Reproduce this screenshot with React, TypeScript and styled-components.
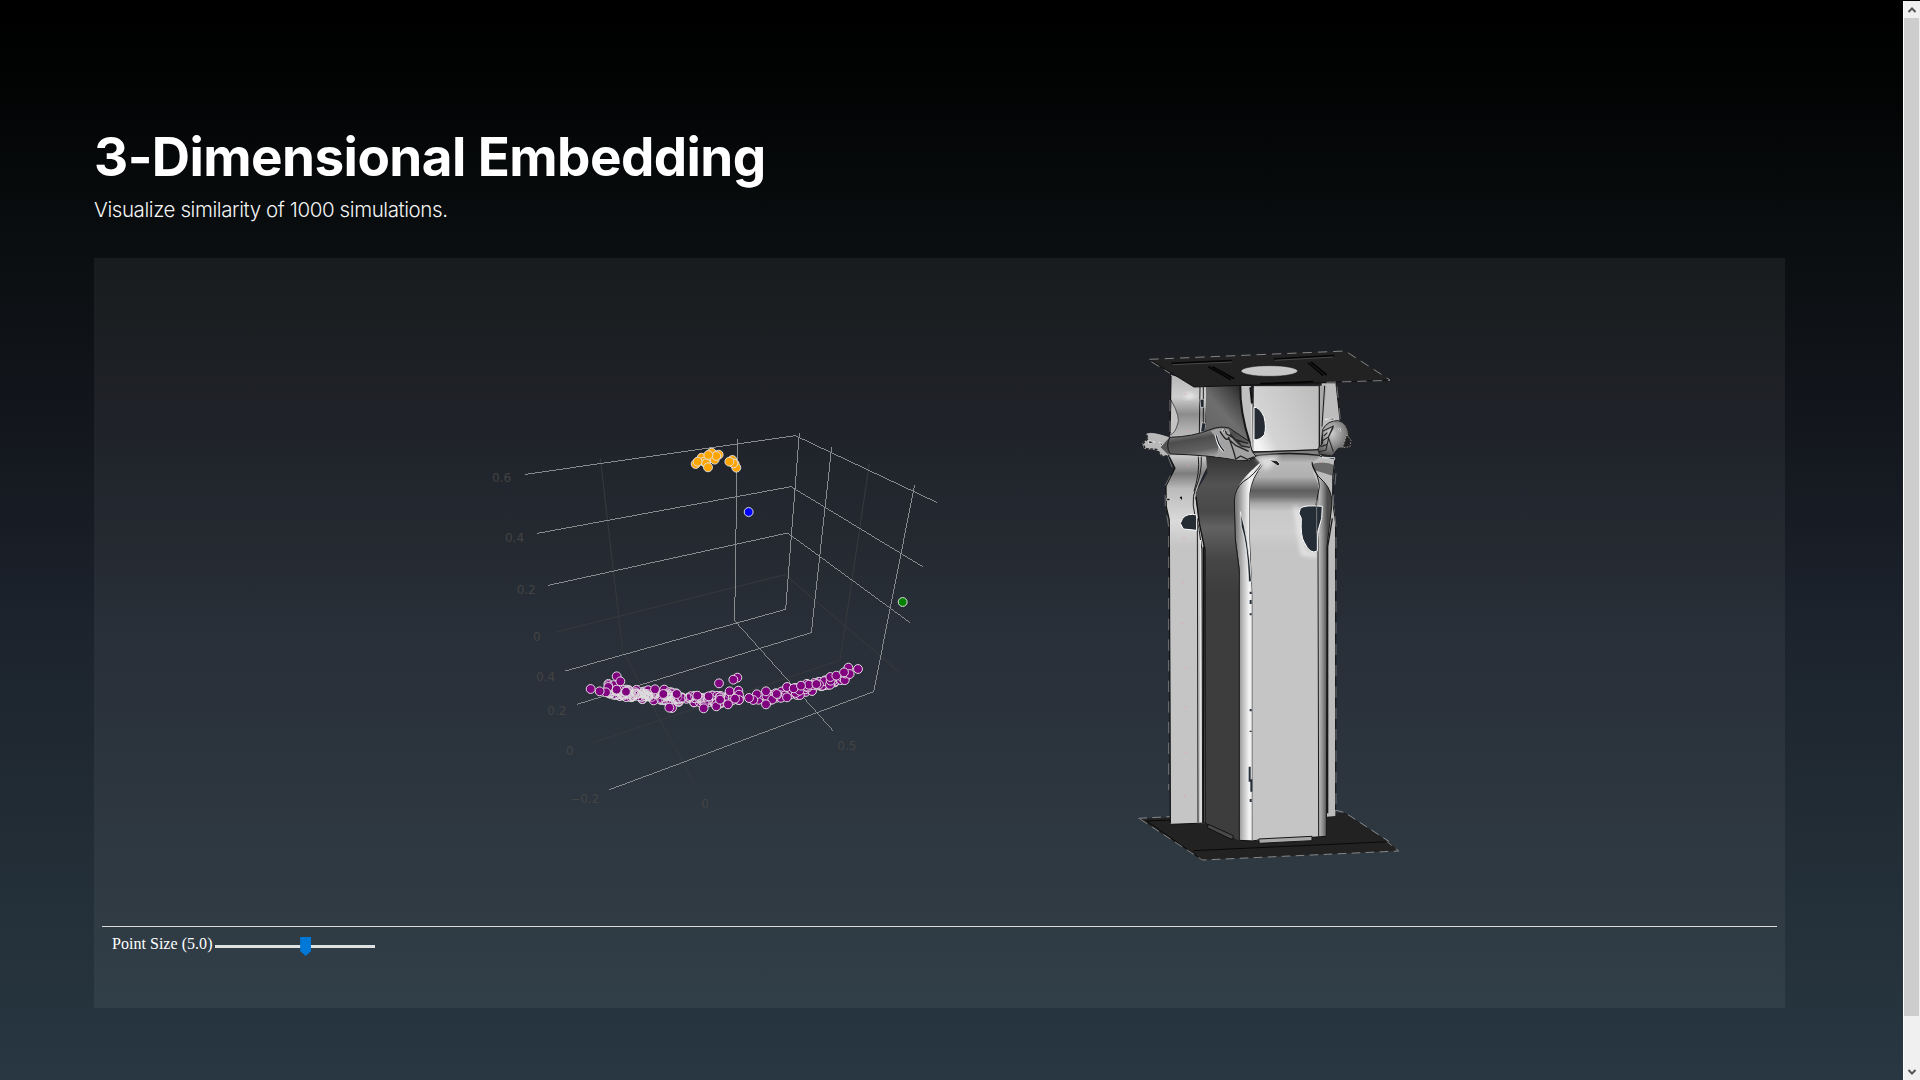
import React, { useState } from 'react';
import styled, { createGlobalStyle } from 'styled-components';

const GlobalStyle = createGlobalStyle`
  html, body { margin: 0; padding: 0; background: #000; }
  body { overflow: hidden; }
`;

const Page = styled.div`
  display: grid;
  grid-template-columns: 1fr 17px;
  height: 1080px;
  background: linear-gradient(180deg, #000 0%, #010202 6%, #0b0f11 24%, #14171e 41%, #1c232d 58%, #222d36 78%, #283742 100%);
`;

const Content = styled.main`
  display: flex;
  flex-direction: column;
  padding: 125px 118px 72px 94px;
`;

const Title = styled.h1`
  margin: 0;
  height: 64px;
  font: 700 53px/64px Inter, sans-serif;
  letter-spacing: -0.58px;
  color: #fff;
  white-space: nowrap;
`;

const Subtitle = styled.p`
  margin: 8px 0 0;
  height: 26px;
  font: 300 20.5px/26px Inter, sans-serif;
  letter-spacing: -0.41px;
  color: #f4f4f4;
  white-space: nowrap;
`;

const Panel = styled.section`
  display: flex;
  flex-direction: column;
  height: 750px;
  margin-top: 35px;
  padding: 0 8px;
  box-sizing: border-box;
  background: rgba(255, 255, 255, 0.055);
`;

const Views = styled.div`
  display: grid;
  grid-template-columns: 838px 837px;
  height: 668px;
  border-bottom: 1px solid #dcdcd8;
`;

const View = styled.svg`
  display: block;
  width: 100%;
  height: 668px;
`;

const Controls = styled.label`
  display: flex;
  align-items: center;
  height: 36px;
  padding: 0 9px 0 10px;
  font: 16px/36px 'Liberation Serif', serif;
  color: #fff;
`;

const LabelText = styled.span`
  width: 103px;
  height: 38px;
  letter-spacing: 0.03px;
  white-space: nowrap;
`;

const Slider = styled.input`
  appearance: none;
  width: 160px;
  height: 19px;
  margin: 3px 0 0;
  background: transparent;
  &::-webkit-slider-runnable-track {
    height: 3px;
    background: #dde1e1;
  }
  &::-webkit-slider-thumb {
    appearance: none;
    width: 11px;
    height: 19px;
    margin-top: -8px;
    background: #0078d7;
    clip-path: polygon(0 0, 100% 0, 100% 74%, 50% 100%, 0 74%);
  }
`;

const Scrollbar = styled.aside`
  display: flex;
  flex-direction: column;
  margin-top: 1px;
  border-left: 1px solid #fff;
  background: #f0f0f0;
`;

const ScrollArrow = styled.svg`
  display: block;
  width: 16px;
  height: 17px;
`;

const ScrollThumb = styled.div`
  height: 998px;
  margin-right: 1px;
  background: #cdcdcd;
`;

const ScrollRest = styled.div`
  flex: 1;
`;

const TickLabel = styled.text`
  font: 36px 'DejaVu Sans', Verdana, sans-serif;
  fill: #444;
`;

type Pt = [number, number];

const bright = [
  '136,163 946,47 1372,248',
  '172,340 933,200 1328,440',
  '205,496 923,339 1290,608',
  '256,753 917,568 958,38',
  '291,853 994,638 1055,82',
  '388,1109 1181,815 1304,194',
  '1060,933 764,602 772,56',
];
const faint = [
  '230,636 915,464 1257,756',
  '334,970 1080,721 1168,132',
  '645,1094 428,692 361,115',
];
const ticks: [number, number, string][] = [
  [36, 187, '0.6'], [75, 365, '0.4'], [110, 523, '0.2'], [159, 664, '0'],
  [168, 782, '0.4'], [202, 884, '0.2'], [258, 1005, '0'], [271, 1149, '−0.2'],
  [664, 1163, '0'], [1072, 991, '0.5'],
];

let seed = 11;
const rnd = () => {
  seed = (seed * 16807) % 2147483647;
  return seed / 2147483647;
};

const spine: Pt[] = [
  [375, 808], [410, 814], [450, 819], [500, 824], [560, 828], [610, 832], [660, 837],
  [720, 838], [780, 832], [805, 835], [850, 834], [890, 826], [930, 815], [970, 806],
  [1010, 799], [1050, 786], [1080, 776], [1110, 758],
];
const spineY = (x: number) => {
  let i = 0;
  while (i < spine.length - 2 && spine[i + 1][0] < x) i++;
  const [a, b] = [spine[i], spine[i + 1]];
  return a[1] + ((x - a[0]) / (b[0] - a[0])) * (b[1] - a[1]);
};
const band = (n: number, x0: number, x1: number, spread: number): Pt[] =>
  Array.from({ length: n }, () => {
    const x = x0 + rnd() * (x1 - x0);
    return [x, spineY(x) + (rnd() + rnd() - 1) * spread] as Pt;
  });

const dense = band(150, 385, 600, 19);
const middle = band(55, 590, 780, 17);
const right = band(85, 815, 1108, 17);

const highlights: Pt[] = [
  [410, 769], [421, 784], [525, 808], [385, 801], [576, 864], [568, 863], [671, 865], [709, 859], [744, 853],
  [749, 814], [775, 812], [777, 824], [777, 840], [652, 827], [686, 829], [720, 839], [765, 836],
  [378, 817], [359, 814], [332, 807], [410, 809], [438, 815], [590, 822], [550, 822],
  [772, 773], [760, 779], [717, 790],
  [820, 840], [858, 814], [858, 853], [807, 834], [921, 832], [890, 822], [921, 801], [941, 805],
  [963, 797], [1051, 771], [1069, 767], [1105, 743], [1109, 762], [1092, 757], [1134, 747],
];
const orange: Pt[] = [
  [647, 132], [665, 113], [672, 125], [690, 113], [678, 130], [684, 142], [716, 104], [695, 98],
  [704, 119], [709, 108], [685, 105], [653, 125], [757, 120], [764, 132], [769, 143], [760, 130], [748, 125],
];

const Dots = ({ pts, color }: { pts: Pt[]; color: string }) => (
  <g fill={color} stroke="#dedede" strokeWidth="3">
    {pts.map(([x, y], i) => <circle key={i} cx={x} cy={y} r="13.3" />)}
  </g>
);

const Embedding = () => (
  <View viewBox="102 258 838 668">
    <g transform="translate(480 420) scale(.333333)">
      <g fill="none" stroke="#373a3d" strokeWidth="3">
        {faint.map((p) => <polyline key={p} points={p} />)}
      </g>
      <g fill="none" stroke="#888b8e" strokeWidth="3" shapeRendering="crispEdges">
        {bright.map((p) => <polyline key={p} points={p} />)}
      </g>
      {ticks.map(([x, y, t]) => <TickLabel key={`${x}-${y}`} x={x} y={y}>{t}</TickLabel>)}
      <Dots pts={dense} color="#800080" />
      <g fill="none" stroke="#dedede" strokeWidth="2.4">
        {dense.slice(0, 75).map(([x, y], i) => <circle key={i} cx={x} cy={y + 2} r="12" />)}
      </g>
      <Dots pts={middle} color="#800080" />
      <g fill="none" stroke="#dedede" strokeWidth="2">
        {middle.slice(0, 22).map(([x, y], i) => <circle key={i} cx={x} cy={y} r="12.5" />)}
        {right.slice(0, 25).map(([x, y], i) => <circle key={i} cx={x} cy={y} r="12.5" />)}
      </g>
      <Dots pts={right} color="#800080" />
      <Dots pts={highlights} color="#800080" />
      <Dots pts={orange} color="#ffa500" />
      <Dots pts={[[806, 276]]} color="#0000ff" />
      <Dots pts={[[1268, 546]]} color="#008000" />
    </g>
  </View>
);

const Stops = ({ list }: { list: [number, string][] }) => (
  <>{list.map(([o, c]) => <stop key={o} offset={o} stopColor={c} />)}</>
);

const CrashModel = () => (
  <View viewBox="940 258 837 668">
    <defs>
      <linearGradient id="side" gradientUnits="userSpaceOnUse" x1="0" y1="110" x2="0" y2="620">
        <Stops list={[[0, '#b8b8b8'], [0.12, '#cfcfcf'], [0.22, '#8c8c8c'], [0.32, '#b4b4b4'], [0.47, '#c8c8c8'], [0.57, '#7d7d7d'], [0.66, '#bbb'], [0.85, '#dadada'], [1, '#c5c5c5']]} />
      </linearGradient>
      <linearGradient id="innerTop" gradientUnits="userSpaceOnUse" x1="258" y1="260" x2="370" y2="160">
        <Stops list={[[0, '#666'], [0.45, '#6e6e6e'], [0.8, '#484848'], [1, '#303030']]} />
      </linearGradient>
      <linearGradient id="inner" gradientUnits="userSpaceOnUse" x1="0" y1="350" x2="0" y2="760">
        <Stops list={[[0, '#333'], [0.2, '#525252'], [0.4, '#494949'], [0.52, '#626262'], [0.75, '#464646'], [1, '#3d3d3d']]} />
      </linearGradient>
      <linearGradient id="corner" gradientUnits="userSpaceOnUse" x1="350" y1="0" x2="400" y2="0">
        <Stops list={[[0, '#808080'], [0.4, '#c0c0c0'], [0.75, '#f4f4f4'], [1, '#e8e8e8']]} />
      </linearGradient>
      <linearGradient id="front" gradientUnits="userSpaceOnUse" x1="0" y1="340" x2="0" y2="620">
        <Stops list={[[0, '#808080'], [0.1, '#b8b8b8'], [0.25, '#b0b0b0'], [0.33, '#848484'], [0.4, '#5e5e5e'], [0.46, '#6e6e6e'], [0.54, '#aaa'], [0.62, '#c8c8c8'], [0.85, '#cdcdcd'], [1, '#c5c5c5']]} />
      </linearGradient>
      <linearGradient id="frontTop" x1="0" x2="1" y1="0.7" y2="0.2">
        <Stops list={[[0, '#f4f4f4'], [0.2, '#d4d4d4'], [1, '#bdbdbd']]} />
      </linearGradient>
      <linearGradient id="edge" gradientUnits="userSpaceOnUse" x1="595" y1="0" x2="622" y2="0">
        <Stops list={[[0, '#c2c2c2'], [0.45, '#929292'], [1, '#4c4c4c']]} />
      </linearGradient>
      <linearGradient id="tube" gradientUnits="userSpaceOnUse" x1="210" y1="272" x2="225" y2="360">
        <Stops list={[[0, '#8c8c8c'], [0.3, '#4d4d4d'], [0.7, '#606060'], [1, '#a8a8a8']]} />
      </linearGradient>
      <radialGradient id="bulb" cx="0.4" cy="0.35" r="0.7">
        <Stops list={[[0, '#d0d0d0'], [0.5, '#8f8f8f'], [1, '#494949']]} />
      </radialGradient>
      <filter id="soft" x="-50%" y="-50%" width="200%" height="200%"><feGaussianBlur stdDeviation="8" /></filter>
    </defs>
    <g transform="translate(1120 340) scale(.333333)" strokeLinejoin="round">
      {/* base plate */}
      <path d="M55 1435L675 1418 808 1507 836 1533 247 1560Z" fill="#222" />
      <path d="M80 1443L160 1440M220 1532L808 1505M80 1443L247 1560" stroke="#090909" strokeWidth="3" fill="none" />
      <path d="M55 1435L150 1430M60 1437L247 1560 836 1533 800 1504M645 1410L675 1418 808 1505" stroke="#a8a8a8" strokeWidth="2.2" strokeDasharray="26 16" fill="none" />

      {/* right rear wall */}
      <path d="M622 130H648L660 240 605 285V130Z" fill="#bdbdbd" />
      <path d="M575 350L645 352 641 400 636 460 645 520 646 1428 620 1430 600 500Z" fill="#bcbcbc" />
      <path d="M575 372Q612 361 645 376L639 408Q607 397 580 390Z" fill="#6b6b6b" />
      <path d="M648 130L660 240M645 355L638 415 640 500 647 550V1410" stroke="#111" strokeWidth="3" fill="none" />
      <path d="M651 140L661 240M648 400L640 480 648 560V1410" stroke="#999" strokeWidth="2" strokeDasharray="34 30" fill="none" />

      {/* left wall */}
      <path d="M153 105L262 135 262 355 262 380Q225 450 227 475L240 560 253 620 256 1450 152 1453 149 620 146 530 138 500 138 438 165 385 148 350 150 280Z" fill="url(#side)" />
      <path d="M153 180Q184 235 172 255 165 280 150 285Z" fill="#c4c4c4" stroke="#222" strokeWidth="2" />
      <ellipse cx="209" cy="168" rx="14" ry="7" fill="#fff" opacity=".8" filter="url(#soft)" />
      <path d="M240 140L238 280M250 140V278M262 140L256 276M244 350Q246 400 227 445T236 560L246 630 248 1449M235 350Q240 397 222 454M232 535L234 1447" fill="none" stroke="#1c1c1c" strokeWidth="3" />
      <path d="M241 600L243 1448" stroke="#e4e4e4" strokeWidth="4" />
      <path d="M153 108L150 280M148 350L165 385 138 438 139 500 148 540 151 1450" fill="none" stroke="#111" strokeWidth="3.5" />
      <path d="M150 180V280M144 350L160 390 135 438 136 500 146 560V1350" fill="none" stroke="#999" strokeWidth="2" strokeDasharray="34 28" />
      <path d="M240 178H252V202H242ZM246 248L258 250 254 275 242 276Z" fill="#202730" stroke="#fff" strokeWidth="1.5" />
      <path d="M230 525Q203 518 188 535L181 550 190 567 230 571Z" fill="#252c34" stroke="#fff" strokeWidth="3" />
      <path d="M178 473L184 466 188 474 186 482ZM140 475H150V482H140Z" fill="#111" stroke="#eee" strokeWidth="2" />

      {/* inner recess */}
      <path d="M258 137H362L368 210 390 310 310 300 258 280Z" fill="url(#innerTop)" />
      <path d="M360 138H392L400 200 397 335Q375 260 362 180Z" fill="#c0c0c0" />
      <path d="M361 138Q359 215 390 310" stroke="#161616" strokeWidth="6" fill="none" />
      <path d="M258 345L430 360Q402 405 360 430 340 455 345 500L350 620 358 700V1502L255 1450 252 620 235 540 227 458 262 400Z" fill="url(#inner)" />
      <path d="M228 470L238 550 255 630V1450M250 620V1448" fill="none" stroke="#111" strokeWidth="4" />

      {/* rounded front corner */}
      <path d="M430 360Q345 430 343 470L348 600 358 680V1500L397 1502V760L390 600V460Q400 410 430 380Z" fill="url(#corner)" />
      <path d="M428 365Q404 405 370 425 345 445 343 480L346 600 358 690V1500M432 370Q395 412 390 460V600L397 760V1500" fill="none" stroke="#181818" strokeWidth="3" />

      {/* front face */}
      <path d="M400 137H598V332L398 335Z" fill="url(#frontTop)" stroke="#222" strokeWidth="3" />
      <path d="M598 137H620L606 270 600 335Z" fill="#aaa" />
      <path d="M598 137V330M614 137L606 260" stroke="#181818" strokeWidth="3" />
      <path d="M391 142L396 190" stroke="#111" strokeWidth="6" />
      <path d="M394 195L397 330" stroke="#ddd" strokeWidth="3" />
      <path d="M398 335L600 328 606 345 576 370Q577 395 592 418L600 500 597 1490 397 1502V760L390 600V460Q398 414 430 377L402 350Z" fill="url(#front)" />
      <path d="M388 337L600 329M400 348Q500 334 600 346" fill="none" stroke="#181818" strokeWidth="4" />
      <path d="M402 350Q435 370 425 390L450 385 480 348Z" fill="#ddd" filter="url(#soft)" />
      <path d="M528 500L550 640 592 645" fill="none" stroke="#fff" strokeWidth="12" opacity=".7" filter="url(#soft)" />
      <path d="M576 372Q580 400 611 425 640 455 635 500L621 620 619 1488 595 1491 597 500 594 430Q576 400 576 372Z" fill="url(#edge)" />
      <path d="M576 366Q577 395 611 425 640 455 635 500L621 620 619 1488M576 372Q597 410 598 440L588 495 594 600 596 1490" fill="none" stroke="#181818" strokeWidth="3" />
      <path d="M637 535L623 620V1420" stroke="#181818" strokeWidth="4" fill="none" />
      <path d="M402 202Q418 200 432 230 440 262 433 284 418 302 402 299Z" fill="#252b33" stroke="#fff" strokeWidth="3" />
      <path d="M541 505Q552 494 607 499L605 535 592 580V633Q570 645 553 607 541 590 544 535L537 520Z" fill="#242c35" stroke="#fff" strokeWidth="3" />
      <path d="M590 480V580" stroke="#777" strokeWidth="3" />
      <path d="M448 360L470 362 480 372 474 378Z" fill="#222" stroke="#eee" strokeWidth="2" />
      <path d="M361 515Q385 590 394 725L386 725Q382 610 364 560Z" fill="#1c232b" stroke="#fff" strokeWidth="2" />
      <path d="M392 755V762M392 780V792M392 820V826M392 1107V1114M392 1172V1176M389 1280V1325M394 1318V1355M392 1377V1386" stroke="#26313b" strokeWidth="6" />

      {/* left crumple */}
      <path d="M145 292Q95 275 80 282L84 296 68 310 73 325 112 330 125 348 148 345 172 320Z" fill="#b8b8b8" stroke="#ccc" strokeWidth="2" />
      <path d="M80 284L84 296 70 310 75 326 110 328 128 350 148 345" fill="none" stroke="#222" strokeWidth="4" strokeDasharray="9 4" />
      <path d="M85 302L105 306 88 312ZM118 306L128 312 125 318Z" fill="#222" stroke="#fff" strokeWidth="2" />
      <path d="M122 322L150 290 158 305 145 344Z" fill="#555" />
      <path d="M150 292Q220 290 270 269 300 257 327 264L389 305 397 335 408 349 386 362 350 360Q265 345 150 342 136 315 150 292Z" fill="url(#tube)" stroke="#1a1a1a" strokeWidth="3" />
      <path d="M272 273Q298 260 325 268L340 300 365 327 400 344 380 358 350 360Q310 350 285 350 310 315 272 273Z" fill="#a2a2a2" />
      <path d="M300 274Q322 310 326 292 344 340 347 358M313 266L320 282 350 300 384 310M323 295L348 317 386 334M330 282L365 318 390 322M346 358L362 348 382 358 402 351" fill="none" stroke="#252525" strokeWidth="4" />
      <path d="M289 286Q292 316 312 333" fill="none" stroke="#fff" strokeWidth="8" />
      <path d="M289 286Q294 314 312 333" fill="none" stroke="#1d242b" strokeWidth="4" />
      <path d="M306 270L316 270 312 278Z" fill="#111" stroke="#fff" strokeWidth="2" />

      {/* right crumple */}
      <path d="M608 268Q623 241 655 242 684 248 687 290L693 310 680 323 655 325 636 348 598 342 594 326 608 310Z" fill="url(#bulb)" stroke="#222" strokeWidth="3" />
      <path d="M608 274L640 258 625 291 603 305M626 293L618 330 596 336M640 262L625 292 640 335M612 288L622 278M602 320L620 314" fill="none" stroke="#292929" strokeWidth="3.5" />
      <path d="M680 285L693 300 690 320 668 323Z" fill="#222" stroke="#bbb" strokeWidth="2" strokeDasharray="5 4" />
      <path d="M615 238L642 234V240ZM606 351L645 354 643 360ZM654 267L662 267 660 274Z" fill="#1d242b" stroke="#fff" strokeWidth="2" />

      {/* top plate */}
      <path d="M88 58L676 33 810 120 580 127 222 141Z" fill="#222" />
      <path d="M88 58L222 141 580 129 810 120" fill="none" stroke="#101010" strokeWidth="3" />
      <path d="M88 58L676 33 810 120M620 127L810 121M94 65L150 100" fill="none" stroke="#a8a8a8" strokeWidth="2.2" strokeDasharray="28 18" />
      <path d="M155 70L335 62M462 57L643 47M420 131L580 125M265 80L333 119M277 80L343 116M564 68L610 107M573 66L620 105" stroke="#050505" strokeWidth="5" />
      <path d="M158 74L335 66M465 61L640 51" stroke="#5c5c5c" strokeWidth="2" />
      <ellipse cx="448" cy="93" rx="85" ry="16" fill="#c7c7c7" stroke="#111" strokeWidth="1.5" />

      {/* weld tabs */}
      <path d="M265 1453L340 1487 339 1497 332 1497 262 1463Z" fill="#4a4a4a" stroke="#111" strokeWidth="3" />
      <path d="M152 1453L256 1449 265 1455M358 1501L397 1503 416 1500M576 1492L618 1489" fill="none" stroke="#111" strokeWidth="3" />
      <path d="M416 1497L576 1489V1502L418 1510Z" fill="#a9a9a9" stroke="#151515" strokeWidth="3" />
      <g fill="#ef9aa8">
        {[[197, 163], [205, 275], [206, 378], [603, 367], [192, 594], [188, 728], [188, 851], [199, 986], [199, 1101], [199, 1237], [194, 1368]].map(([x, y]) => (
          <circle key={y} cx={x} cy={y} r="2" />
        ))}
      </g>
    </g>
  </View>
);

export default function App() {
  const [size, setSize] = useState(5);
  return (
    <>
      <GlobalStyle />
      <Page>
        <Content>
          <Title>3-Dimensional Embedding</Title>
          <Subtitle>Visualize similarity of 1000 simulations.</Subtitle>
          <Panel>
            <Views>
              <Embedding />
              <CrashModel />
            </Views>
            <Controls>
              <LabelText>Point Size ({size.toFixed(1)})</LabelText>
              <Slider type="range" min="1" max="8" step="0.1" value={size} onChange={(e) => setSize(Number(e.target.value))} />
            </Controls>
          </Panel>
        </Content>
        <Scrollbar>
          <ScrollArrow viewBox="0 0 16 17"><path d="M4.5 11L8 7.5 11.5 11" fill="none" stroke="#555" strokeWidth="2" /></ScrollArrow>
          <ScrollThumb />
          <ScrollRest />
          <ScrollArrow viewBox="0 0 16 17"><path d="M4.5 7L8 10.5 11.5 7" fill="none" stroke="#555" strokeWidth="2" /></ScrollArrow>
        </Scrollbar>
      </Page>
    </>
  );
}
